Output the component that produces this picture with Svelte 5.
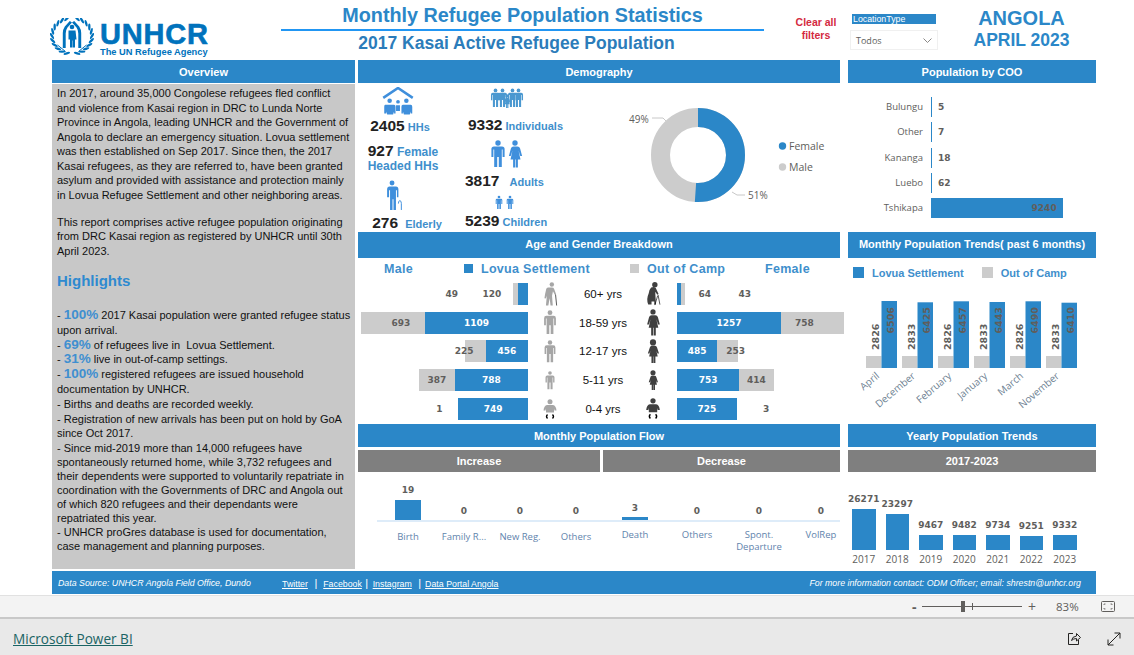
<script>
  const ageRows = [
    { label: "60+ yrs", male: [120, 49], female: [64, 43], mi: "oldman", fi: "oldwoman", mh: 24, fh: 24, outside: true },
    { label: "18-59 yrs", male: [1109, 693], female: [1257, 758], mi: "man", fi: "woman", mh: 25, fh: 27, dxM: 8, dxF: -8 },
    { label: "12-17 yrs", male: [456, 225], female: [485, 253], mi: "man", fi: "girl", mh: 23, fh: 24, dxM: -11, dxF: 8 },
    { label: "5-11 yrs", male: [788, 387], female: [753, 414], mi: "man", fi: "girl", mh: 19, fh: 20 },
    { label: "0-4 yrs", male: [749, 1], female: [725, 3], mi: "baby", fi: "baby", mh: 20, fh: 21, tiny: true },
  ];
  const coo = [
    { name: "Bulungu", n: 5 },
    { name: "Other", n: 7 },
    { name: "Kananga", n: 18 },
    { name: "Luebo", n: 62 },
    { name: "Tshikapa", n: 9240 },
  ];
  const trends = [
    { m: "April", a: 6506, o: 2826, top: 18 },
    { m: "December", a: 6425, o: 2833, top: 19.3 },
    { m: "February", a: 6457, o: 2826, top: 18.3 },
    { m: "January", a: 6443, o: 2833, top: 19 },
    { m: "March", a: 6490, o: 2826, top: 18.3 },
    { m: "November", a: 6410, o: 2833, top: 19.7 },
  ];
  const increase = [
    { name: "Birth", n: 19 },
    { name: "Family R...", n: 0 },
    { name: "New Reg.", n: 0 },
    { name: "Others", n: 0 },
  ];
  const decrease = [
    { name: "Death", n: 3 },
    { name: "Others", n: 0 },
    { name: "Spont. Departure", n: 0 },
    { name: "VolRep", n: 0 },
  ];
  const years = [
    { y: 2017, n: 26271 },
    { y: 2018, n: 23297 },
    { y: 2019, n: 9467 },
    { y: 2020, n: 9482 },
    { y: 2021, n: 9734 },
    { y: 2022, n: 9251 },
    { y: 2023, n: 9332 },
  ];

  // wreath leaves for the logo, mirrored in the markup
  const leaves = Array(11)
    .fill()
    .map((_, i) => {
      const deg = 105 + i * 15;
      const a = (deg * Math.PI) / 180;
      return {
        x: 22 + 20 * Math.cos(a),
        y: 18 + 18 * Math.sin(a),
        r: deg,
      };
    });
</script>

<svg class="defs" aria-hidden="true">
  <defs>
    <symbol id="man" viewBox="0 0 16 28">
      <circle cx="8" cy="3" r="2.7" />
      <path d="M4 6.5h8q2.6 0 2.6 2.6v8h-2v-7.500h-.8v17.400h-3v-10h-1.600v10h-3v-17.400h-.8v7.500h-2v-8q0-2.600 2.600-2.600z" />
    </symbol>
    <symbol id="woman" viewBox="0 0 16 28">
      <circle cx="8" cy="3" r="2.7" />
      <path d="M5.500 6.500h5q2 0 2.600 2l2 7.500h-1.800l-1.800-5.500 2 9h-2.600v8h-2.100v-8h-.6v8h-2.100v-8h-2.600l2-9-1.800 5.500h-1.800l2-7.500q.6-2 2.600-2z" />
    </symbol>
    <symbol id="girl" viewBox="0 0 16 28">
      <circle cx="8" cy="4" r="3.600" />
      <path d="M5.500 8h5q1.600 0 2.200 2l2.300 7h-1.800l-1.200-3 1.500 6.500h-2.700v7.500h-2.100v-7.500h-.4v7.500h-2.100v-7.500h-2.700l1.500-6.500-1.200 3h-1.800l2.300-7q.6-2 2.200-2z" />
    </symbol>
    <symbol id="oldman" viewBox="0 0 16 26">
      <circle cx="10" cy="2.800" r="2.400" />
      <path d="M6 6h4q2 0 2.500 1.500l2 5.500-1.300.7-2-3.700-1 5 .8 10.500h-2.400l-1-8-1.400 8h-2.600l1-11q-.5 2-1.300 3.500l-1.300-.5q.4-4 1.500-8q.5-3.500 2.500-3.500z" />
      <path d="M14 13.500l1.200 12" fill="none" stroke="currentColor" stroke-width=".7" />
    </symbol>
    <symbol id="oldwoman" viewBox="0 0 18 26">
      <circle cx="11" cy="3" r="2.900" />
      <path d="M7 6q3-1.500 5 .5l3 6.500-1.300.8-2.300-3.300.8 14h-1.800v-3.500h-3v3.500h-3.600q-2.300-6 .5-12q.6-4.500 2.700-6.500z" />
      <path d="M14.500 14l2 10.500M11 25l3-10" fill="none" stroke="currentColor" stroke-width=".7" />
    </symbol>
    <symbol id="baby" viewBox="0 0 16 20">
      <circle cx="8" cy="2.700" r="2.500" />
      <path d="M5 6h6q3 .5 3.500 5.500h-2l-.5-2v4h-8v-4l-.5 2h-2q.5-5 3.500-5.500z" />
      <path d="M5.500 15.500q-2 2 0 4M10.500 15.500q2 2 0 4" fill="none" stroke="currentColor" stroke-width="1.300" />
    </symbol>
  </defs>
</svg>

<div class="page">
  <div class="report">
    <header class="top">
      <div class="logo">
        <svg class="crest" viewBox="0 0 44 38" width="44" height="38">
          <g fill="#0072bc">
            {#each leaves as l}
              <ellipse cx={l.x} cy={l.y} rx="3.400" ry="1.200" transform="rotate({l.r + 60} {l.x} {l.y})" />
              <ellipse cx={44 - l.x} cy={l.y} rx="3.400" ry="1.200" transform="rotate({-l.r - 60} {44 - l.x} {l.y})" />
            {/each}
            <circle cx="22" cy="9" r="2.300" />
            <path d="M18.500 12.500h7l1 9h-1.500v8h-2.300v-7h-.4v7h-2.300v-8h-1.500z" />
            <path d="M12.800 30v-15q0-3.500 2-6.500l5-5.500 2.200 1.500-4.500 5q-1.800 2.500-1.800 6v14.500zM31.200 30v-15q0-3.500-2-6.500l-5-5.500-2.200 1.500 4.500 5q1.800 2.500 1.800 6v14.500z" />
            <path d="M7.500 27l8 6.500M36.500 27l-8 6.500" stroke="#0072bc" fill="none" />
          </g>
        </svg>
        <div class="wordmark">
          <div class="unhcr">UNHCR</div>
          <div class="agency">The UN Refugee Agency</div>
        </div>
      </div>

      <div class="titles">
        <h1>Monthly Refugee Population Statistics</h1>
        <h2>2017 Kasai Active Refugee Population</h2>
      </div>

      <div class="clear">Clear all<br />filters</div>

      <div class="slicer">
        <div class="slicer-head">LocationType</div>
        <div class="select">
          <span>Todos</span>
          <svg width="9" height="5" viewBox="0 0 9 5"><path d="M.5.500l4 4 4-4" fill="none" stroke="#8a8886" /></svg>
        </div>
      </div>

      <div class="place">
        <div class="country">ANGOLA</div>
        <div class="month">APRIL 2023</div>
      </div>
    </header>

    <main class="columns">
      <section class="col-left">
        <div class="bar">Overview</div>
        <div class="overview">
          <p>
            In 2017, around 35,000 Congolese refugees fled conflict<br />and violence from Kasai region in DRC to Lunda Norte
            Province in Angola, leading UNHCR and the Government of Angola to declare an emergency situation. Lovua settlement
            was then established on Sep 2017. Since then, the 2017 Kasai refugees, as they are referred to, have been granted
            asylum and provided with assistance and protection mainly in Lovua Refugee Settlement and other neighboring areas.
          </p>
          <p class="second">
            This report comprises active refugee population originating from DRC Kasai region as registered by UNHCR until 30th
            April 2023.
          </p>
          <h3>Highlights</h3>
          <p class="list">
            - <b>100%</b> 2017 Kasai population were granted refugee status upon arrival.<br />
            - <b>69%</b> of refugees live in &nbsp;Lovua Settlement.<br />
            - <b>31%</b> live in out-of-camp settings.<br />
            - <b>100%</b> registered refugees are issued household documentation by UNHCR.<br />
            - Births and deaths are recorded weekly.<br />
            - Registration of new arrivals has been put on hold by GoA since Oct 2017.
          </p>
          <p class="tail">
            - Since mid-2019 more than 14,000 refugees have spontaneously returned home, while 3,732 refugees and their dependents
            were supported to voluntarily repatriate in coordination with the Governments of DRC and Angola out of which 820
            refugees and their dependants were repatriated this year.<br />
            - UNHCR proGres database is used for documentation,<br />case management and planning purposes.
          </p>
        </div>
      </section>

      <section class="col-mid">
        <div class="bar">Demography</div>
        <div class="demo">
          <div class="demo-a">
            <svg class="hh" width="32" height="28" viewBox="0 0 32 28">
              <path d="M1 11L16 1l15 10" fill="none" stroke="#3f8fdc" stroke-width="2.600" />
              <g fill="#3f8fdc">
                <circle cx="7.500" cy="14" r="2.300" /><circle cx="16" cy="15" r="1.900" /><circle cx="24.500" cy="14" r="2.300" />
                <path d="M3 18h9q1.500 0 1.500 2v7h-1.500v-2l-1 3h-6l-1-3v2h-2v-7q0-2 1-2zM19 18h10q1.500 0 1.500 2v7h-1.500v-2l-1 3h-6l-1-3v2h-1.500v-7q0-2 1.500-2zM14 18.500h4v6h-4z" />
              </g>
            </svg>
            <div class="stat s1"><b>2405</b> <span>HHs</span></div>
            <div class="stat s2"><b>927</b> <span>Female<br />Headed HHs</span></div>
            <svg class="elder" width="18" height="31" viewBox="0 0 18 31" fill="#3f8fdc">
              <circle cx="8" cy="3" r="2.500" />
              <path d="M4 6.500h8q2.500 0 2.500 3v8h-1.500v-7h-1v20h-2.500v-11h-1v11h-2.500v-20h-1v7h-2v-8q0-3 2.500-3z" />
              <path d="M14.500 24q0-3 1.500-3t1.500 3v6.500" fill="none" stroke="#3f8fdc" stroke-width="1" />
            </svg>
            <div class="stat s3"><b>276</b> <span>Elderly</span></div>
          </div>
          <div class="demo-b">
            <svg class="group" width="34" height="20" viewBox="0 0 34 20" fill="#4a98d0">
              <use href="#man" x="0" y="0" width="11" height="20" />
              <use href="#man" x="7" y="0" width="11" height="20" />
              <use href="#girl" x="13" y="6" width="8" height="14" />
              <use href="#man" x="17" y="0" width="11" height="20" />
              <use href="#man" x="23" y="0" width="11" height="20" />
            </svg>
            <div class="stat t1"><b>9332</b> <span>Individuals</span></div>
            <div class="couple">
              <svg width="16" height="28" fill="#3f8fdc"><use href="#man" /></svg>
              <svg width="16" height="28" fill="#3f8fdc"><use href="#woman" /></svg>
            </div>
            <div class="stat t2"><b>3817</b> <span>Adults</span></div>
            <div class="kids">
              <svg width="8" height="15" fill="#3f8fdc"><use href="#man" /></svg>
              <svg width="8" height="15" fill="#3f8fdc"><use href="#man" /></svg>
            </div>
            <div class="stat t3"><b>5239</b> <span>Children</span></div>
          </div>
          <svg class="donut" width="212" height="149" viewBox="628 83 212 149">
            <circle cx="698" cy="155" r="37.500" fill="none" stroke="#cccccc" stroke-width="19" />
            <circle
              cx="698"
              cy="155"
              r="37.500"
              fill="none"
              stroke="#2b87c8"
              stroke-width="19"
              stroke-dasharray="120.200 235.600"
              transform="rotate(-90 698 155)"
            />
            <path d="M652 118h11l3 3M732 192l5 3h8" fill="none" stroke="#c8c8c8" />
            <text class="pct" x="629" y="123">49%</text>
            <text class="pct" x="748" y="199">51%</text>
            <circle cx="782.500" cy="146" r="3.700" fill="#2b87c8" />
            <circle cx="782.500" cy="167" r="3.700" fill="#cccccc" />
            <text class="leg" x="789" y="150">Female</text>
            <text class="leg" x="789" y="171">Male</text>
          </svg>
        </div>

        <div class="bar tall">Age and Gender Breakdown</div>
        <div class="age">
          <div class="age-legend">
            <span class="c-male">Male</span>
            <span class="c-lovua"><i class="sw blue"></i>Lovua Settlement</span>
            <span class="c-camp"><i class="sw grey"></i>Out of Camp</span>
            <span>Female</span>
          </div>
          <div class="age-grid">
            {#each ageRows as r}
              <div class="side left">
                {#if r.outside}
                  <span class="val out wide">{r.male[1]}</span>
                  <span class="val out wide first">{r.male[0]}</span>
                  <i class="seg grey" style="width:{r.male[1] * 0.0929 + 0.5}px"></i>
                  <i class="seg blue" style="width:{r.male[0] * 0.0929 - 1}px"></i>
                {:else if r.tiny}
                  <span class="val out lone-l">{r.male[1]}</span>
                  <span class="seg blue val w" style="width:{r.male[0] * 0.0929}px">{r.male[0]}</span>
                {:else}
                  <span class="seg grey val" style="width:{r.male[1] * 0.0929}px"><em style="left:{r.dxM || 0}px">{r.male[1]}</em></span>
                  <span class="seg blue val w" style="width:{r.male[0] * 0.0929}px">{r.male[0]}</span>
                {/if}
              </div>
              <svg class="person" fill="#a6a6a6" style="height:{r.mh}px"><use href="#{r.mi}" /></svg>
              <div class="age-label">{r.label}</div>
              <svg class="person" fill="#404040" style="height:{r.fh}px"><use href="#{r.fi}" /></svg>
              <div class="side right">
                {#if r.outside}
                  <i class="seg blue" style="width:{r.female[0] * 0.0827 - 1}px"></i>
                  <i class="seg grey" style="width:{r.female[1] * 0.0827}px"></i>
                  <span class="val out wide o1">{r.female[0]}</span>
                  <span class="val out wide o2">{r.female[1]}</span>
                {:else if r.tiny}
                  <span class="seg blue val w" style="width:{r.female[0] * 0.0827}px">{r.female[0]}</span>
                  <span class="val out lone-r">{r.female[1]}</span>
                {:else}
                  <span class="seg blue val w" style="width:{r.female[0] * 0.0827}px">{r.female[0]}</span>
                  <span class="seg grey val" style="width:{r.female[1] * 0.0827}px"><em style="left:{r.dxF || 0}px">{r.female[1]}</em></span>
                {/if}
              </div>
            {/each}
          </div>
        </div>

        <div class="bar">Monthly Population Flow</div>
        <div class="subbars">
          <div class="sub inc">Increase</div>
          <div class="sub dec">Decrease</div>
        </div>
        <div class="flow">
          <div class="flow-bars">
            {#each increase as f}
              <div class="fc inc-c">
                <span class="val">{f.n}</span>
                <i class="seg blue" style="height:{f.n * 1.06}px"></i>
              </div>
            {/each}
            {#each decrease as f}
              <div class="fc dec-c">
                <span class="val">{f.n}</span>
                <i class="seg blue" style="height:{f.n * 1}px"></i>
              </div>
            {/each}
          </div>
          <div class="flow-names">
            {#each increase as f}
              <div class="fn inc-c down">{f.name}</div>
            {/each}
            {#each decrease as f}
              <div class="fn dec-c">{f.name}</div>
            {/each}
          </div>
        </div>
      </section>

      <section class="col-right">
        <div class="bar">Population by COO</div>
        <div class="coo">
          {#each coo as c}
            <div class="coo-name">{c.name}</div>
            <div class="coo-track">
              <span class="coo-bar" style="width:{Math.max(1, c.n * 0.01425)}px">
                {#if c.n > 1000}<span class="val">{c.n}</span>{/if}
              </span>
              {#if c.n <= 1000}<span class="val">{c.n}</span>{/if}
            </div>
          {/each}
        </div>

        <div class="bar tall">Monthly Population Trends( past 6 months)</div>
        <div class="trends">
          <div class="trend-legend">
            <span class="tl-a"><i class="sw big blue"></i>Lovua Settlement</span>
            <span><i class="sw big grey"></i>Out of Camp</span>
          </div>
          <svg width="248" height="141" viewBox="848 283 248 141" class="trend-svg">
            {#each trends as t, i}
              {@const x = 866 + i * 36}
              <rect {x} y="356" width="15.500" height="12" fill="#cccccc" />
              <rect x={x + 15.500} y={283 + t.top} width="15.500" height={85 - t.top} fill="#2b87c8" />
              <text class="num" transform="translate({x + 13} 350) rotate(-90)">{t.o}</text>
              <text class="num" transform="translate({x + 27.500} 333.500) rotate(-90)">{t.a}</text>
              <text class="mon" text-anchor="end" transform="translate({x + 14} 377) rotate(-40)">{t.m}</text>
            {/each}
          </svg>
        </div>

        <div class="bar">Yearly Population Trends</div>
        <div class="sub whole">2017-2023</div>
        <div class="yearly">
          {#each years as y}
            <div class="yc">
              <span class="val">{y.n}</span>
              <i class="seg blue" style="height:{y.n * 0.00156}px"></i>
              <small>{y.y}</small>
            </div>
          {/each}
        </div>
      </section>
    </main>

    <footer class="foot">
      <em class="src">Data Source: UNHCR Angola Field Office, Dundo</em>
      <span class="links">
        <a href="#top">Twitter</a><span class="pipe p1">|</span>
        <a href="#top">Facebook</a><span class="pipe p2">|</span>
        <a href="#top">Instagram</a><span class="pipe p3">|</span>
        <a href="#top">Data Portal Angola</a>
      </span>
      <em class="contact">For more information contact: ODM Officer; email: shrestn@unhcr.org</em>
    </footer>
  </div>

  <div class="status">
    <span class="minus">-</span>
    <div class="slider"><i class="tick"></i><i class="thumb"></i></div>
    <span class="plus">+</span>
    <span class="zoom">83%</span>
    <svg class="fit" width="14" height="11" viewBox="0 0 14 11" fill="none" stroke="#605e5c">
      <rect x=".5" y=".5" width="13" height="10" rx="1" />
      <path d="M3 4V3h1.500M11 4V3H9.500M3 7v1h1.500M11 7v1H9.500" stroke-width=".8" />
    </svg>
  </div>

  <div class="brandbar">
    <a class="pbi" href="#top">Microsoft Power BI</a>
    <svg class="share" width="15" height="15" viewBox="0 0 15 15" fill="none" stroke="#252423">
      <path d="M6 2.500H1.500v11h10V9" />
      <path d="M4.500 9.500q.5-4 5-4.500V2.500l4 4-4 3.500V7.500q-3 0-5 2z" />
    </svg>
    <svg class="expand" width="14" height="14" viewBox="0 0 14 14" fill="none" stroke="#252423">
      <path d="M1 13L13 1M7.500 1H13v5.500M1 7.500V13h5.500" />
    </svg>
  </div>
</div>

<style>
  :global(body) {
    margin: 0;
    background: #fff;
  }

  .defs {
    position: absolute;
    width: 0;
    height: 0;
  }

  .page {
    width: 1134px;
    height: 655px;
    overflow: hidden;
    display: flex;
    flex-direction: column;
    font-family: "Liberation Sans", Arial, sans-serif;
  }

  .report {
    height: 595px;
    padding-left: 52px;
    box-sizing: border-box;
  }

  /* top strip */
  .top {
    height: 60px;
    display: flex;
    position: relative;
  }

  .logo {
    width: 158px;
    margin-left: -2px;
    padding-top: 18px;
    box-sizing: border-box;
    display: flex;
    gap: 6px;
    color: #0072bc;
  }

  .crest {
    flex: none;
  }

  .unhcr {
    font-size: 29px;
    line-height: 26px;
    font-weight: 700;
    letter-spacing: 0.8px;
    -webkit-text-stroke: 0.6px #0072bc;
    margin-top: 3px;
    white-space: nowrap;
  }

  .agency {
    font-size: 9.300px;
    line-height: 11px;
    font-weight: 700;
    white-space: nowrap;
  }

  .titles {
    width: 483px;
    margin-left: 73px;
    text-align: center;
  }

  h1 {
    margin: 4px 0 0;
    padding-bottom: 2px;
    font-size: 19.800px;
    line-height: 23px;
    color: #2b87c8;
    border-bottom: 2px solid #2196f3;
  }

  h2 {
    margin: 2px 12px 0 0;
    font-size: 17.500px;
    line-height: 21px;
    color: #2b7cba;
  }

  .clear {
    width: 52px;
    margin-left: 26px;
    padding-top: 16px;
    text-align: center;
    font-size: 10.500px;
    line-height: 13px;
    font-weight: 700;
    color: #d4293f;
  }

  .slicer {
    width: 88px;
    margin-left: 8px;
    padding-top: 14px;
  }

  .slicer-head {
    width: 84px;
    margin-left: 2px;
    height: 10px;
    line-height: 10px;
    background: #2b87c8;
    color: #fff;
    font-size: 8.800px;
    padding-left: 1px;
    box-sizing: border-box;
  }

  .select {
    margin-top: 6px;
    height: 20px;
    border: 1px solid #f0f0f0;
    box-sizing: border-box;
    display: flex;
    align-items: center;
    justify-content: space-between;
    padding: 0 5px 0 5px;
    font-family: "Open Sans", sans-serif;
    font-size: 9px;
    color: #605e5c;
  }

  .place {
    width: 97px;
    margin-left: 35px;
    padding-top: 7px;
    text-align: center;
    font-weight: 700;
    color: #2b87c8;
    white-space: nowrap;
  }

  .country {
    font-size: 20px;
    line-height: 23px;
  }

  .month {
    font-size: 17.500px;
    line-height: 21px;
  }

  /* columns */
  .columns {
    display: flex;
    height: 510px;
  }

  .col-left {
    width: 303px;
    margin-right: 3px;
  }

  .col-mid {
    width: 482px;
    margin-right: 8px;
  }

  .col-right {
    width: 248px;
  }

  .bar {
    height: 23px;
    line-height: 24px;
    background: #2b87c8;
    color: #fff;
    font-size: 11px;
    font-weight: 700;
    text-align: center;
  }

  .bar.tall {
    height: 26px;
    line-height: 25px;
  }

  .overview {
    margin-top: 1px;
    height: 485px;
    padding: 2px 2px 0 5px;
    box-sizing: border-box;
    background: #c8c8c8;
    color: #111;
    font-size: 11px;
    line-height: 14.500px;
  }

  .overview p {
    margin: 0;
  }

  .overview .second {
    margin-top: 12.500px;
  }

  h3 {
    margin: 13px 0 0;
    font-size: 15px;
    line-height: 20px;
    color: #2e8ad0;
  }

  .overview .list {
    margin-top: 17px;
    line-height: 14.800px;
  }

  .overview .tail {
    line-height: 14px;
  }

  .list b {
    font-size: 13.500px;
    color: #3f8fd0;
    font-weight: 700;
  }

  /* demography */
  .demo {
    height: 149px;
    display: flex;
    position: relative;
  }

  .demo-a {
    width: 84px;
    display: flex;
    flex-direction: column;
    align-items: center;
  }

  .demo-b {
    width: 186px;
    display: flex;
    flex-direction: column;
  }

  .stat {
    white-space: nowrap;
    line-height: 16px;
    color: #3f8fcc;
    font-size: 11px;
    font-weight: 700;
  }

  .stat b {
    color: #222;
    font-size: 15.500px;
  }

  .hh {
    margin-top: 4px;
    margin-right: 4px;
  }

  .s1 {
    margin-top: 3px;
  }

  .s2 {
    margin-top: 9px;
    margin-left: 6px;
    text-align: center;
    font-size: 12px;
    line-height: 14px;
  }

  .elder {
    margin-top: 7px;
    margin-right: 14px;
  }

  .s3 {
    margin-top: 5px;
    margin-left: 14px;
  }

  .s3 span {
    margin-left: 4px;
  }

  .group {
    margin: 5px 0 0 48px;
  }

  .t1 {
    margin: 9px 0 0 26px;
  }

  .couple {
    margin: 6px 0 0 48px;
    display: flex;
    gap: 1px;
  }

  .t2 {
    margin: 5px 0 0 23px;
  }

  .t2 span {
    margin-left: 7px;
  }

  .kids {
    margin: 5px 0 0 53px;
    display: flex;
    gap: 3px;
  }

  .t3 {
    margin: 3px 0 0 23px;
  }

  .donut {
    flex: none;
    margin-left: 0;
  }

  .pct {
    font: 10px "Open Sans", sans-serif;
    fill: #605e5c;
  }

  .leg {
    font: 10.500px "Open Sans", sans-serif;
    fill: #605e5c;
  }

  /* shared value label */
  .val {
    font: 700 9px "DejaVu Sans", sans-serif;
    color: #605e5c;
  }

  .val.w {
    color: #fff;
  }

  .seg {
    display: block;
    flex: none;
  }

  .blue {
    background: #2b87c8;
  }

  .grey {
    background: #cccccc;
  }

  /* age and gender */
  .age {
    height: 166px;
  }

  .age-legend {
    height: 25px;
    display: flex;
    align-items: center;
    padding: 0 0 3px 26px;
    box-sizing: border-box;
    color: #3f8fcc;
    font-size: 12.500px;
    font-weight: 700;
    letter-spacing: 0.3px;
  }

  .c-male {
    width: 80px;
  }

  .c-lovua {
    width: 166px;
  }

  .c-camp {
    width: 135px;
  }

  .sw {
    display: inline-block;
    width: 9px;
    height: 9px;
    margin-right: 8px;
  }

  .sw.big {
    width: 11px;
    height: 11px;
    margin-right: 8px;
    vertical-align: -1px;
  }

  .age-grid {
    display: grid;
    grid-template-columns: 170px 44px 62px 38px 1fr;
    grid-auto-rows: 22px;
    row-gap: 6.700px;
  }

  .side {
    display: flex;
    align-items: stretch;
    white-space: nowrap;
  }

  .side.left {
    justify-content: flex-end;
  }

  .side.right {
    padding-left: 5px;
  }

  .side .val {
    display: flex;
    align-items: center;
    justify-content: center;
  }

  .side em {
    position: relative;
    font-style: normal;
  }

  .out.wide {
    width: 40px;
  }

  .out.first {
    margin-right: 1px;
  }

  .o1 {
    margin-left: 0;
  }

  .lone-l {
    margin-right: 16px;
  }

  .lone-r {
    margin-left: 26px;
  }

  .person {
    width: 18px;
    justify-self: center;
    align-self: center;
  }

  .age-label {
    text-align: center;
    line-height: 22px;
    font-size: 11.500px;
    color: #111;
    white-space: nowrap;
  }

  /* flow */
  .subbars {
    margin-top: 3px;
    display: flex;
    gap: 3px;
  }

  .sub {
    height: 22px;
    line-height: 23px;
    background: #7f7f7f;
    color: #fff;
    font-size: 11px;
    font-weight: 700;
    text-align: center;
  }

  .sub.inc {
    width: 242px;
  }

  .sub.dec {
    flex: 1;
  }

  .sub.whole {
    margin-top: 3px;
  }

  .flow {
    height: 98px;
  }

  .flow-bars {
    height: 48px;
    margin-left: 19px;
    padding-left: 3px;
    display: flex;
    border-bottom: 2px solid #deecf9;
  }

  .fc {
    display: flex;
    flex-direction: column;
    align-items: center;
    justify-content: flex-end;
    flex: none;
  }

  .fc .val {
    line-height: 12px;
    margin-bottom: 3.500px;
  }

  .fc .seg {
    width: 26px;
  }

  .inc-c {
    width: 56px;
    flex: none;
  }

  .dec-c {
    width: 62px;
    flex: none;
  }

  .flow-names {
    margin-left: 22px;
    display: flex;
    padding-top: 7px;
  }

  .fn {
    text-align: center;
    font: 9.500px/12px "Open Sans", sans-serif;
    color: #5f84ad;
    padding: 0 6px;
    box-sizing: border-box;
    white-space: normal;
  }

  .fn.down {
    padding: 2px 0 0;
    white-space: nowrap;
  }

  /* coo */
  .coo {
    height: 149px;
    padding-top: 14px;
    box-sizing: border-box;
    display: grid;
    grid-template-columns: 75px 1fr;
    grid-auto-rows: 20px;
    row-gap: 5.300px;
    column-gap: 8px;
    align-content: start;
  }

  .coo-name {
    text-align: right;
    font: 9.500px/20px "Open Sans", sans-serif;
    color: #605e5c;
  }

  .coo-track {
    display: flex;
    align-items: center;
  }

  .coo-bar {
    display: flex;
    align-self: stretch;
    align-items: center;
    justify-content: flex-end;
    background: #2b87c8;
    border-left: 0;
  }

  .coo-bar .val {
    margin-right: 6px;
  }

  .coo-track > .val {
    margin-left: 6px;
  }

  /* trends */
  .trends {
    height: 166px;
  }

  .trend-legend {
    height: 25px;
    padding: 9px 0 0 5px;
    box-sizing: border-box;
    color: #3f8fcc;
    font-size: 11px;
    line-height: 12px;
    font-weight: 700;
    white-space: nowrap;
  }

  .tl-a {
    margin-right: 15px;
  }

  .trend-svg {
    display: block;
  }

  .num {
    font: 9.500px "DejaVu Sans", sans-serif;
    font-weight: 700;
    fill: #605e5c;
  }

  .mon {
    font: 10px "Open Sans", sans-serif;
    fill: #6d7f92;
  }

  /* yearly */
  .yearly {
    height: 98px;
    display: flex;
    margin-left: -1px;
    align-items: flex-end;
    box-sizing: border-box;
    padding-bottom: 4px;
  }

  .yc {
    width: 33.500px;
    display: flex;
    flex-direction: column;
    align-items: center;
    position: relative;
  }

  .yc .seg {
    width: 23.500px;
    margin-top: 4px;
  }

  .yc .val {
    line-height: 11px;
    white-space: nowrap;
  }

  .yc small {
    font: 10px/14px "Open Sans", sans-serif;
    color: #605e5c;
    margin-top: 2px;
  }

  /* footer strip */
  .foot {
    width: 1044px;
    margin-top: 1px;
    height: 23px;
    display: flex;
    align-items: center;
    padding: 0 15px 0 6px;
    box-sizing: border-box;
    background: #2b87c8;
    color: #fff;
    font-size: 8.800px;
  }

  .src {
    width: 224px;
    white-space: nowrap;
  }

  .links {
    white-space: nowrap;
  }

  .links a {
    color: #fff;
  }

  .pipe {
    font-size: 11px;
  }

  .p1 {
    margin: 0 3.500px 0 6.500px;
  }

  .p2 {
    margin: 0 2px 0 3.500px;
  }

  .p3 {
    margin: 0 1.500px 0 6.500px;
  }

  .contact {
    margin-left: auto;
    white-space: nowrap;
  }

  /* zoom strip */
  .status {
    height: 24px;
    border-top: 1px solid #e1e1e1;
    border-bottom: 2px solid #c8c8c8;
    box-sizing: border-box;
    background: #f3f3f3;
    display: flex;
    align-items: center;
    padding-left: 912px;
    color: #605e5c;
    font-family: "Open Sans", sans-serif;
  }

  .status .minus {
    width: 10px;
    font-size: 14px;
    font-weight: 700;
  }

  .slider {
    width: 100px;
    height: 1px;
    background: #605e5c;
    position: relative;
  }

  .thumb {
    position: absolute;
    left: 39px;
    top: -5px;
    width: 4px;
    height: 11px;
    background: #605e5c;
  }

  .tick {
    position: absolute;
    left: 50px;
    top: -3px;
    width: 1px;
    height: 7px;
    background: #605e5c;
  }

  .plus {
    width: 34px;
    padding-left: 6px;
    box-sizing: border-box;
    font-size: 14px;
  }

  .zoom {
    font-size: 11.500px;
    width: 45px;
  }

  .brandbar {
    flex: 1;
    background: #e9e9e9;
    display: flex;
    align-items: center;
    padding-left: 13px;
    padding-top: 3px;
    box-sizing: border-box;
  }

  .pbi {
    font: 13.600px "Open Sans", sans-serif;
    color: #1a6464;
    text-decoration: underline;
  }

  .share {
    margin-left: auto;
  }

  .expand {
    margin: 0 13px 0 25px;
  }
</style>
